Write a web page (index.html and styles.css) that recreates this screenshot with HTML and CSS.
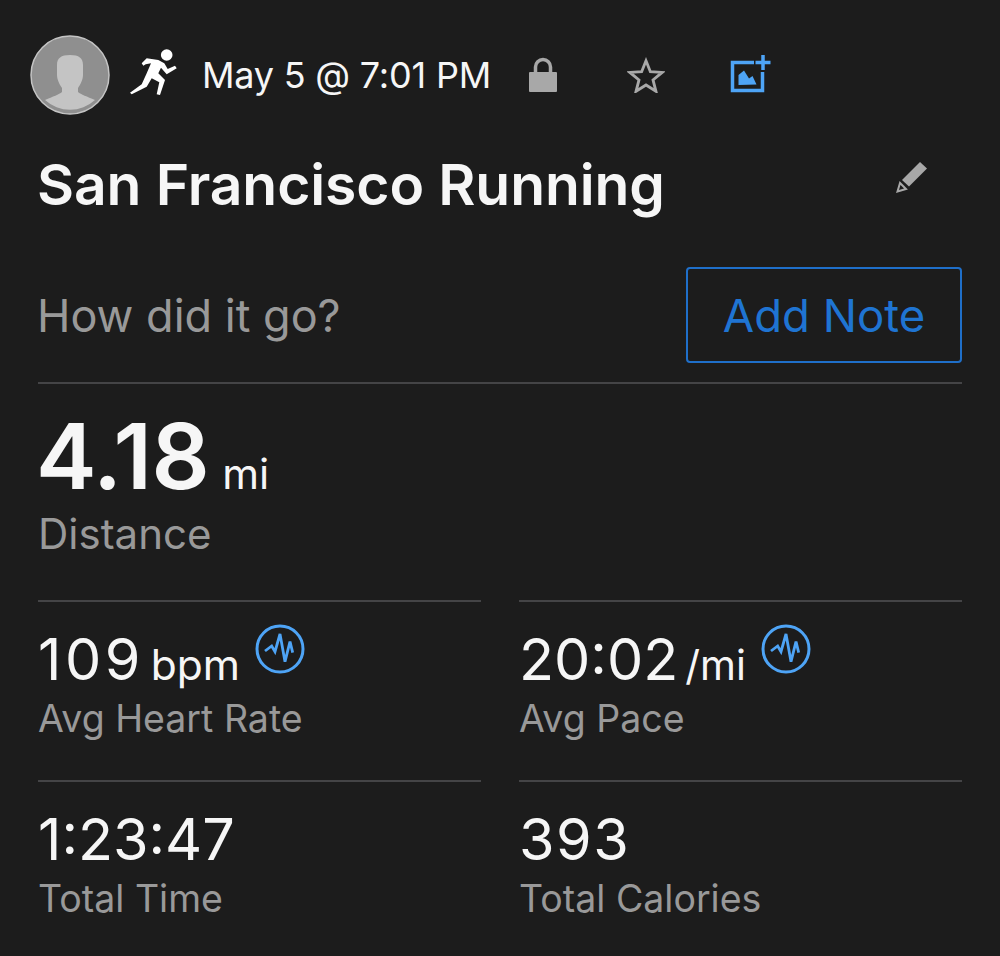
FILE: index.html
```html
<!DOCTYPE html>
<html lang="en">
<head>
<meta charset="utf-8">
<title>San Francisco Running</title>
<link rel="stylesheet" href="styles.css">
</head>
<body>
<main class="page">
  <header class="top">
    <div class="avatar">
      <svg viewBox="0 0 80 80" width="80" height="80" aria-hidden="true">
        <circle cx="40" cy="40" r="39" fill="#8f8f8f" stroke="#c4c4c4" stroke-width="1.500"/>
        <path class="sil" d="M40 20c-9 0-13 3-13 10v10c0 5 3 10 5 13v4c-3 2.500-9 4.500-17 8a37 37 0 0 0 50 0c-8-3.500-14-5.500-17-8v-4c2-3 5-8 5-13V30c0-7-4-10-13-10z"/>
      </svg>
    </div>
    <svg class="runner" viewBox="0 0 48 50" width="48" height="50" aria-hidden="true">
      <circle cx="37.700" cy="6" r="5.800" fill="#fff"/>
      <path fill="#fff" d="M12.700 14.300l5-5L29.300 11l6 3.300 3.400 5.700 7.300-3.300 1.700 2.600-10 6-5.700-6.600-2.700 5.600L36 31l-5 15-3.300-.700 2.600-12-7.600-4-5 8.400-15 7.600-1.700-1.600 11.700-8.400 5-11 4.300-10-5.300 1-2.400 1.400z"/>
    </svg>
    <span class="date">May 5 @ 7:01 PM</span>
    <svg class="lock" viewBox="0 0 28 36" width="28" height="36" aria-hidden="true">
      <path fill="none" stroke="#a8a8a8" stroke-width="3.500" d="M6.500 16V10a7.500 7.500 0 0 1 15 0v6"/>
      <rect x="0" y="15" width="28" height="20" rx="1" fill="#a8a8a8"/>
    </svg>
    <svg class="star" viewBox="0 0 40 38" width="38" height="36" aria-hidden="true">
      <path fill="none" stroke="#a8a8a8" stroke-width="3" stroke-linejoin="miter" d="M20 4l4.600 11.500 12.400.8-9.600 7.900 3.100 12L20 29.600 9.500 36.200l3.100-12L3 16.300l12.400-.8z"/>
    </svg>
    <svg class="addphoto" viewBox="0 0 42 40" width="42" height="40" aria-hidden="true">
      <path fill="none" stroke="#4ea4f6" stroke-width="3.500" d="M25 9.500H3.500v28h30V19"/>
      <path fill="none" stroke="#4ea4f6" stroke-width="3.500" d="M34 2v15M26.500 9.500h15"/>
      <path fill="#4ea4f6" d="M9.500 32V22l5.500-4.500 5 8 3.500-2.500 4 8.500z"/>
    </svg>
  </header>

  <div class="title-row">
    <h1 class="title">San Francisco Running</h1>
    <svg class="pencil" viewBox="0 0 32 32" width="32" height="32" aria-hidden="true">
      <path fill="#a8a8a8" d="M24 0l7 6.500-18 18-7-6.500z"/>
      <path fill="none" stroke="#a8a8a8" stroke-width="2" d="M4 21L1.500 29.500 10 27z"/>
    </svg>
  </div>

  <div class="note-row">
    <span class="prompt">How did it go?</span>
    <button class="note-btn" type="button">Add Note</button>
  </div>

  <section class="distance">
    <div class="value-line wide"><span class="big">4.18</span> <span class="unit">mi</span></div>
    <div class="label label-large">Distance</div>
  </section>

  <section class="stats">
    <div class="stat">
      <div class="value-line metric">
        <span class="num spaced">109</span> <span class="unit">bpm</span>
        <svg class="wave" viewBox="0 0 50 50" width="50" height="50" aria-hidden="true"><use href="#wave"/></svg>
      </div>
      <div class="label">Avg Heart Rate</div>
    </div>
    <div class="stat">
      <div class="value-line metric">
        <span class="num">20:02</span> <span class="unit">/mi</span>
        <svg class="wave" viewBox="0 0 50 50" width="50" height="50" aria-hidden="true"><use href="#wave"/></svg>
      </div>
      <div class="label">Avg Pace</div>
    </div>
    <div class="stat">
      <div class="value-line"><span class="num">1:23:47</span></div>
      <div class="label">Total Time</div>
    </div>
    <div class="stat">
      <div class="value-line"><span class="num slight">393</span></div>
      <div class="label">Total Calories</div>
    </div>
  </section>

  <svg class="defs" width="0" height="0" aria-hidden="true">
    <symbol id="wave" viewBox="0 0 50 50">
      <circle cx="25" cy="25" r="23" fill="none" stroke="#4ea4f6" stroke-width="3"/>
      <path fill="none" stroke="#4ea4f6" stroke-width="2.800" stroke-linejoin="miter" d="M10 27l6.700-5 3.300 5.700L25 10l5 27.700 5-20 2.700 11"/>
    </symbol>
  </svg>
</main>
</body>
</html>
```

FILE: styles.css
```css
* { box-sizing: border-box; }
html, body { margin: 0; padding: 0; }
body {
  background: #1c1c1c;
  color: #f6f6f6;
  font-family: Inter, "Liberation Sans", sans-serif;
  height: 956px;
  overflow: hidden;
}
.page { padding: 35px 38px 0; }
.top { display: flex; align-items: center; height: 80px; margin-left: -8px; }
.avatar { width: 80px; height: 80px; flex: none; }
.avatar svg { display: block; }
.sil { fill: #c4c4c4; }
.runner { margin-left: 19px; flex: none; margin-top: -2px; }
.date { margin-left: 25px; font-size: 36px; letter-spacing: -0.2px; white-space: nowrap; }
.lock { margin-left: 38px; flex: none; }
.star { margin-left: 70px; flex: none; }
.addphoto { margin-left: 64px; margin-top: -5px; flex: none; }
.title-row { display: flex; justify-content: space-between; align-items: flex-start; margin-top: 32px; height: 76px; padding-right: 34px; }
.title { margin: 0 0 0 -1px; font-size: 57px; font-weight: 600; letter-spacing: -0.1px; line-height: 76px; }
.pencil { margin-top: 15px; flex: none; }
.note-row { display: flex; justify-content: space-between; align-items: center; margin-top: 44px; padding-bottom: 19px; border-bottom: 2px solid #444446; }
.prompt { font-size: 45px; color: #999; margin-left: -1px; }
.note-btn { width: 276px; height: 96px; background: transparent; border: 2px solid #1f6fc9; border-radius: 4px; color: #1f74d2; font: 400 45.5px Inter, "Liberation Sans", sans-serif; padding: 0; }
.distance { padding-top: 24px; height: 216px; }
.value-line { display: flex; align-items: baseline; gap: 14px; white-space: nowrap; }
.wide { gap: 13px; }
.wide .unit { font-size: 42px; }
.metric { gap: 7px; }
.big { font-size: 91px; font-weight: 600; line-height: 96px; letter-spacing: -0.5px; margin-left: -2px; }
.unit { font-size: 41px; }
.spaced + .unit { font-size: 42.5px; }
.label { font-size: 37.5px; color: #999; line-height: 48px; margin-top: 4px; }
.label-large { font-size: 42px; margin-top: 6px; }
.stats { display: grid; grid-template-columns: 1fr 1fr; column-gap: 38px; }
.stat { border-top: 2px solid #444446; height: 180px; padding-top: 25px; }
.stat:nth-child(n+3) { height: 176px; }
.num { font-size: 57.5px; line-height: 64px; }
.spaced { letter-spacing: 3.5px; }
.slight { letter-spacing: 1.5px; }
.wave { align-self: flex-start; margin-left: 8px; margin-top: -3px; }
.defs { position: absolute; }
```
